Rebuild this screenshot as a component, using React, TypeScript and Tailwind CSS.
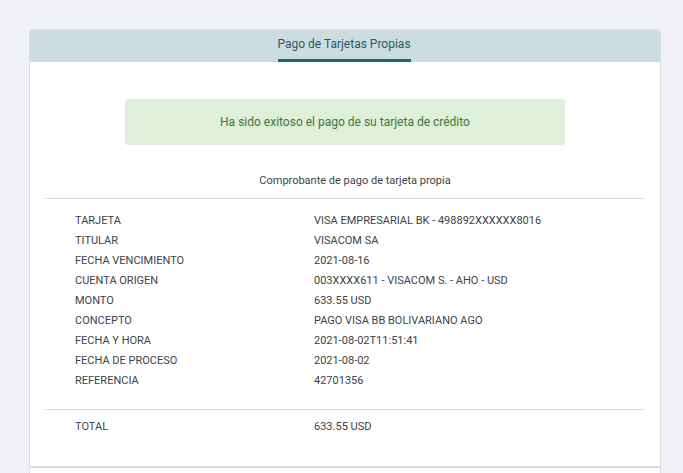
import React from "react";

const rows: [string, string][] = [
  ["TARJETA", "VISA EMPRESARIAL BK - 498892XXXXXX8016"],
  ["TITULAR", "VISACOM SA"],
  ["FECHA VENCIMIENTO", "2021-08-16"],
  ["CUENTA ORIGEN", "003XXXX611 - VISACOM S. - AHO - USD"],
  ["MONTO", "633.55 USD"],
  ["CONCEPTO", "PAGO VISA BB BOLIVARIANO AGO"],
  ["FECHA Y HORA", "2021-08-02T11:51:41"],
  ["FECHA DE PROCESO", "2021-08-02"],
  ["REFERENCIA", "42701356"],
];

export default function App() {
  return (
    <div
      className="w-[683px] h-[473px] overflow-hidden bg-[#f0f1f6] pt-[29px]"
      style={{ fontFamily: "Roboto, 'Liberation Sans', sans-serif" }}
    >
      <div className="ml-[29px] w-[632px] h-[460px] border border-[#dcdfe4] rounded-t-[4px] bg-white flex flex-col">
        <div className="h-[32px] bg-[#ccdde1] rounded-t-[3px] flex justify-center items-end shrink-0">
          <div className="w-[133px] flex flex-col items-center ml-[-2px]">
            <span className="whitespace-nowrap text-[12px] leading-[16px] text-[#2f5766] mb-[7px]">Pago de Tarjetas Propias</span>
            <div className="h-[3px] w-full bg-[#1e6873]" />
          </div>
        </div>
        <div className="pt-[37px] flex flex-col">
          <div className="mx-[95px] h-[46px] rounded-[3px] bg-[#dfefd9] flex items-center justify-center text-[12px] text-[#3b7a3d]">
            Ha sido exitoso el pago de su tarjeta de crédito
          </div>
          <div className="mt-[28px] h-[16px] leading-[16px] text-[11px] text-[#3d4348] text-center pl-[20px]">
            Comprobante de pago de tarjeta propia
          </div>
          <div className="mx-[15px] mt-[9px] border-t border-[#dcdcdc] pt-[12px] pb-[18px] border-b">
            {rows.map(([k, v]) => (
              <div key={k} className="flex h-[20px] items-center text-[11px] text-[#3d4348]">
                <div className="w-[269px] pl-[30px]">{k}</div>
                <div>{v}</div>
              </div>
            ))}
          </div>
          <div className="mx-[15px] pt-[7px] pb-[29px]">
            <div className="flex h-[20px] items-center text-[11px] text-[#3d4348]">
              <div className="w-[269px] pl-[30px]">TOTAL</div>
              <div>633.55 USD</div>
            </div>
          </div>
          <div className="h-[2px] bg-[#dddddd]" />
        </div>
      </div>
    </div>
  );
}
